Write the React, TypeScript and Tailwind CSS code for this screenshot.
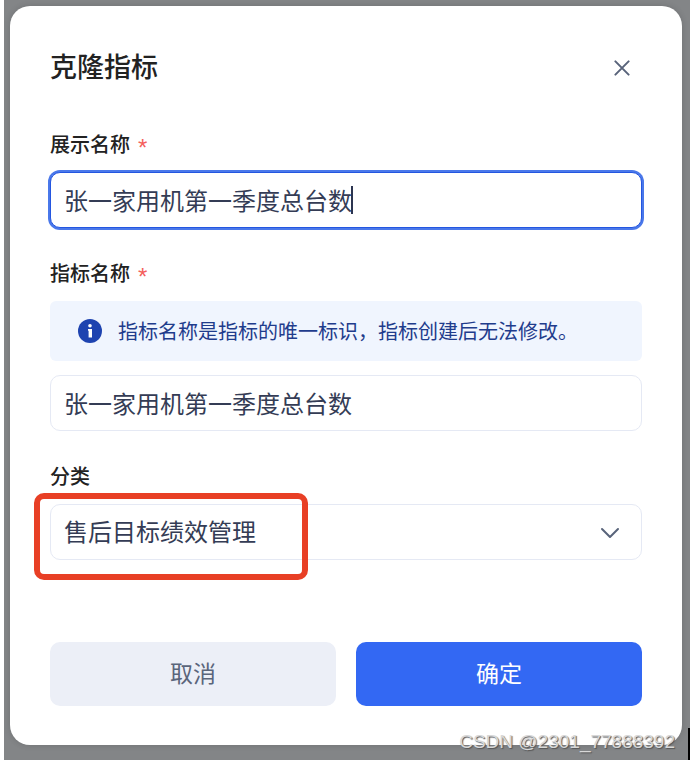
import { useState } from 'react'

const categories = ['售后目标绩效管理']

const inputClass =
  'block h-14 w-full rounded-[10px] border bg-white px-[13px] pb-[2px] text-[24px] text-[#343c55] outline-none'

interface FieldLabelProps {
  htmlFor: string
  text: string
  required?: boolean
}

function FieldLabel({ htmlFor, text, required }: FieldLabelProps) {
  return (
    <label htmlFor={htmlFor} className="mb-[14px] flex h-7 gap-2 text-[20px] leading-7 font-medium text-[#222]">
      {text}
      {required && (
        <span className="pt-1 font-['Liberation_Sans',sans-serif] text-[24px] font-normal text-[#f4605c]">*</span>
      )}
    </label>
  )
}

function CloseIcon() {
  return (
    <svg width="16" height="16" viewBox="0 0 16 16" fill="none" stroke="#58637a" strokeWidth="2" strokeLinecap="round">
      <path d="M1.4 1.4l13.2 13.2M14.6 1.4L1.4 14.6" />
    </svg>
  )
}

function InfoIcon() {
  return (
    <svg className="shrink-0" width="24" height="24" viewBox="0 0 24 24">
      <circle cx="12" cy="12" r="12" fill="#1e43b0" />
      <circle cx="12" cy="6.8" r="1.8" fill="#fff" />
      <path d="M10 10h4v8.4h-3.4v-6.6H10z" fill="#fff" />
    </svg>
  )
}

function ChevronIcon() {
  return (
    <svg
      className="pointer-events-none absolute top-[23px] right-[22px]"
      width="20"
      height="12"
      viewBox="0 0 20 12"
      fill="none"
      stroke="#58637a"
      strokeWidth="2"
      strokeLinecap="round"
      strokeLinejoin="round"
    >
      <path d="M2 2l8 8 8-8" />
    </svg>
  )
}

export default function App() {
  const [displayName, setDisplayName] = useState('张一家用机第一季度总台数')
  const [metricName, setMetricName] = useState('张一家用机第一季度总台数')
  const [category, setCategory] = useState(categories[0])

  return (
    <div
      lang="zh-CN"
      className="min-h-screen bg-white pl-1 font-['Noto_Sans_CJK_SC',sans-serif]"
    >
      <div className="relative min-h-screen bg-[#838587] pt-[6px] pr-2 pb-[15px] pl-[6px]">
        <div role="dialog" aria-labelledby="dialog-title" className="rounded-[20px] bg-white px-10 pt-10 pb-[39px] shadow-[0_0_6px_rgba(0,0,0,0.15)]">
          <header className="mb-10 flex h-11 items-center justify-between">
            <h1 id="dialog-title" className="pb-1 text-[27px] font-medium text-[#222]">克隆指标</h1>
            <button type="button" aria-label="关闭" className="p-3">
              <CloseIcon />
            </button>
          </header>

          <form className="flex flex-col gap-[31px]" onSubmit={(e) => e.preventDefault()}>
            <div>
              <FieldLabel htmlFor="display-name" text="展示名称" required />
              <div className="relative">
                <input
                  id="display-name"
                  className={`${inputClass} border-[#2456e0] ring-2 ring-[#4a78ea]`}
                  value={displayName}
                  onChange={(e) => setDisplayName(e.target.value)}
                />
                <span className="pointer-events-none absolute top-[14px] left-[301px] h-7 w-[2px] bg-[#2c3550]" />
              </div>
            </div>

            <div>
              <FieldLabel htmlFor="metric-name" text="指标名称" required />
              <div className="mb-[14px] flex min-h-[60px] items-center gap-4 rounded-md bg-[#f0f5fe] px-7 text-[20px] text-[#1f3c8c]">
                <InfoIcon />
                <p>指标名称是指标的唯一标识，指标创建后无法修改。</p>
              </div>
              <input
                id="metric-name"
                className={`${inputClass} border-[#e5e9f4]`}
                value={metricName}
                onChange={(e) => setMetricName(e.target.value)}
              />
            </div>

            <div>
              <FieldLabel htmlFor="category" text="分类" />
              <div className="relative">
                <select
                  id="category"
                  className={`${inputClass} appearance-none border-[#e5e9f4]`}
                  value={category}
                  onChange={(e) => setCategory(e.target.value)}
                >
                  {categories.map((item) => (
                    <option key={item}>{item}</option>
                  ))}
                </select>
                <ChevronIcon />
                <div className="pointer-events-none absolute -top-[11px] -left-4 h-[87px] w-[274px] rounded-[10px] border-[6px] border-[#e83f25]" />
              </div>
            </div>

            <div className="mt-[51px] grid grid-cols-2 gap-5 text-[23px]">
              <button type="button" className="h-16 rounded-[10px] bg-[#eceff7] pb-1 text-[#5a657b]">取消</button>
              <button type="submit" className="h-16 rounded-[10px] bg-[#3368f3] pb-1 text-white">确定</button>
            </div>
          </form>
        </div>

        <div className="absolute right-[15px] bottom-[6px] font-['Liberation_Sans',sans-serif] text-[19px] leading-6 text-[#d8d8d8] [text-shadow:1px_1px_1px_#555]">
          CSDN @2301_77888392
        </div>
        <div className="absolute right-0 bottom-0 h-8 w-[2px] bg-black" />
      </div>
    </div>
  )
}
